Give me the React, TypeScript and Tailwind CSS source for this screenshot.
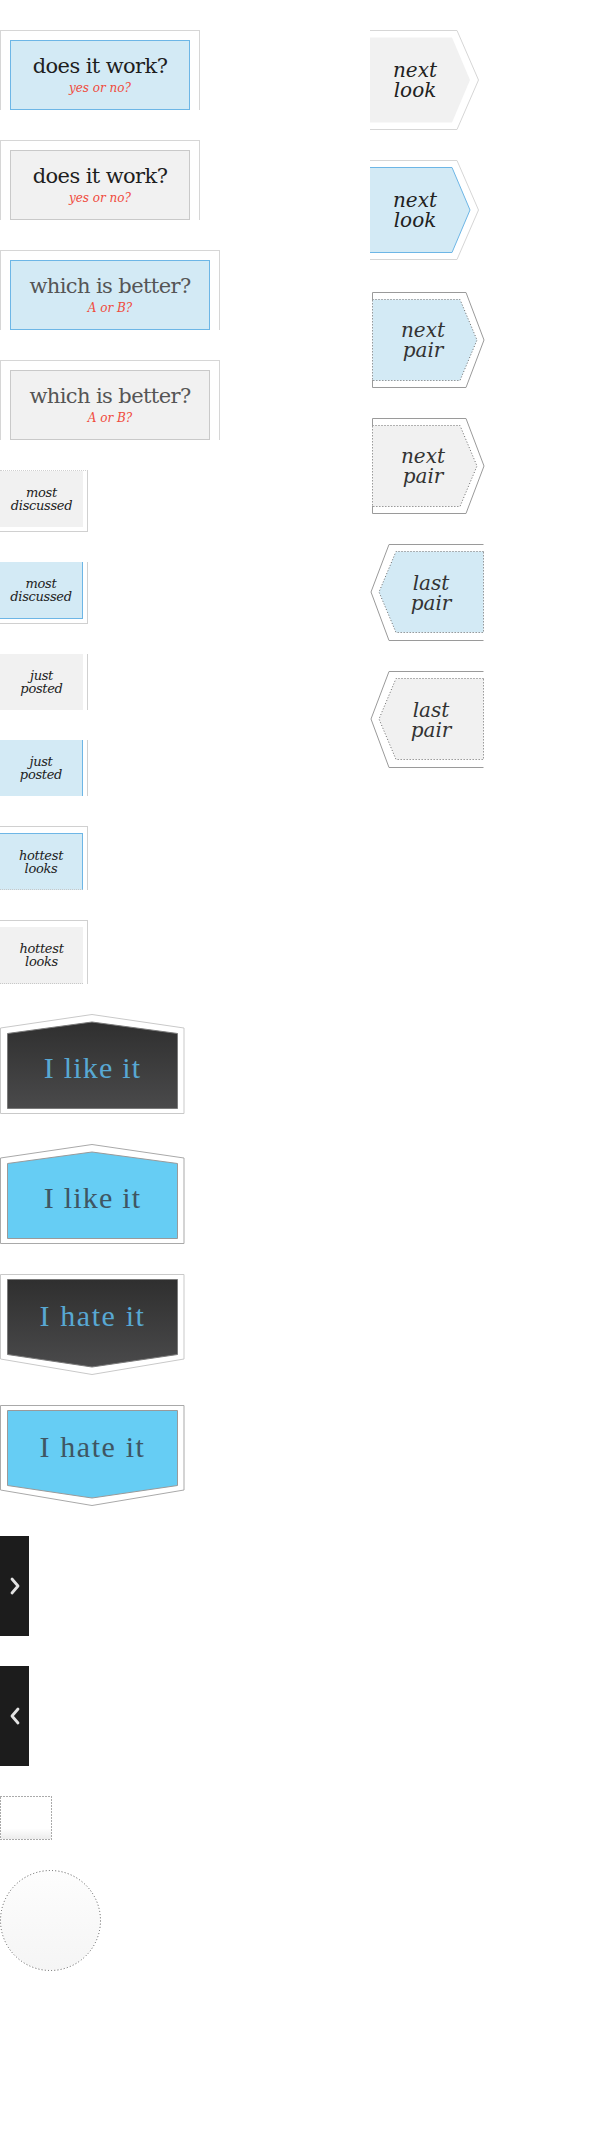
import React from "react";

const slab = "font-['DejaVu_Serif',serif]";
const thin = "font-['Liberation_Serif',serif]";

const BLUE_FILL = "#d3eaf5";
const BLUE_LINE = "#6db6e6";
const GRAY_FILL = "#f1f1f1";

const QuestionBox = ({ title, sub, blue, wide, dim }: any) => (
  <div
    className={`${wide ? "w-[220px]" : "w-[200px]"} h-[80px] border border-b-0 border-[#d6d6d6] pt-[9px] px-[9px]`}
  >
    <div
      className={`h-[70px] border flex flex-col items-center pt-[13px] ${
        blue ? "border-[#6db6e6] bg-[#d3eaf5]" : "border-[#c9c9c9] bg-[#f1f1f1]"
      }`}
    >
      <span
        className={`${slab} text-[21px] leading-[24px] tracking-[-0.6px] ${dim ? "text-[#555555]" : "text-[#1e1e1e]"}`}
      >
        {title}
      </span>
      <span className={`${slab} italic text-[12px] leading-[16px] mt-[2px] text-[#f04a3c]`}>{sub}</span>
    </div>
  </div>
);

const Label = ({ lines }: any) => (
  <div className={`h-full flex flex-col items-center justify-center ${slab} italic text-[13px] leading-[13px] text-[#222] tracking-[-0.3px]`}>
    {lines.map((l: string) => (
      <span key={l}>{l}</span>
    ))}
  </div>
);

const MostDiscussed = ({ blue }: any) =>
  blue ? (
    <div className="w-[88px] h-[62px] border-r border-b border-[#d0d0d0] pr-[4px] pb-[4px]">
      <div className="h-full bg-[#d3eaf5] border-r border-b border-[#6db6e6]">
        <Label lines={["most", "discussed"]} />
      </div>
    </div>
  ) : (
    <div className="w-[88px] h-[62px] border-t border-r border-b border-[#d0d0d0] [border-top-style:dotted] pr-[4px] pb-[4px]">
      <div className="h-full bg-[#f1f1f1]">
        <Label lines={["most", "discussed"]} />
      </div>
    </div>
  );

const JustPosted = ({ blue }: any) => (
  <div className="w-[88px] h-[56px] border-r border-[#d0d0d0] pr-[4px]">
    <div className={`h-full ${blue ? "bg-[#d3eaf5] border-r border-[#6db6e6]" : "bg-[#f1f1f1]"}`}>
      <Label lines={["just", "posted"]} />
    </div>
  </div>
);

const HottestLooks = ({ blue }: any) => (
  <div className="w-[88px] h-[64px] border-t border-r border-[#d0d0d0] pt-[6px] pr-[4px]">
    <div
      className={`h-full border-b border-b-[#c8c8c8] [border-bottom-style:dotted] ${
        blue ? "bg-[#d3eaf5] border-t border-r border-t-[#6db6e6] border-r-[#6db6e6]" : "bg-[#f1f1f1]"
      }`}
    >
      <Label lines={["hottest", "looks"]} />
    </div>
  </div>
);

const ArrowText = ({ top, bottom, className }: any) => (
  <div
    className={`absolute inset-0 flex flex-col items-center justify-center ${slab} italic text-[20px] leading-[20px] text-[#222] ${className}`}
  >
    <span>{top}</span>
    <span>{bottom}</span>
  </div>
);

const NextLook = ({ blue }: any) => (
  <div className="relative w-[112px] h-[100px]">
    <svg width="112" height="100" className="absolute inset-0">
      <polygon points="0,0.5 87,0.5 108.5,50 87,99.5 0,99.5" fill="#ffffff" />
      <polyline points="0,0.5 87,0.5 108.5,50 87,99.5 0,99.5" fill="none" stroke="#d6d6d6" />
      <polygon points="0,7.5 82,7.5 100,50 82,92.5 0,92.5" fill={blue ? BLUE_FILL : GRAY_FILL} />
      {blue && <polyline points="0,7.5 82,7.5 100,50 82,92.5 0,92.5" fill="none" stroke={BLUE_LINE} />}
    </svg>
    <ArrowText top="next" bottom="look" className="pr-[22px]" />
  </div>
);

const NextPair = ({ blue }: any) => (
  <div className="relative w-[116px] h-[96px]">
    <svg width="116" height="96" className="absolute inset-0">
      <polygon points="2.5,7.5 90,7.5 107,48 90,88.5 2.5,88.5" fill={blue ? BLUE_FILL : GRAY_FILL} />
      <polygon
        points="2.5,7.5 90,7.5 107,48 90,88.5 2.5,88.5"
        fill="none"
        stroke="#6a6a6a"
        strokeDasharray="1 2"
      />
      <polyline points="2.5,8 2.5,0.5 96,0.5 114,48 96,95.5 2.5,95.5 2.5,88" fill="none" stroke="#9a9a9a" />
    </svg>
    <ArrowText top="next" bottom="pair" className="pr-[10px] text-[#333]" />
  </div>
);

const LastPair = ({ blue }: any) => (
  <div className="relative w-[116px] h-[97px]">
    <svg width="116" height="97" className="absolute inset-0">
      <polygon points="113.5,7.5 26,7.5 9,48 26,88.5 113.5,88.5" fill={blue ? BLUE_FILL : GRAY_FILL} />
      <polygon
        points="113.5,7.5 26,7.5 9,48 26,88.5 113.5,88.5"
        fill="none"
        stroke="#6a6a6a"
        strokeDasharray="1 2"
      />
      <polyline points="19,0.5 113.5,0.5" fill="none" stroke="#9a9a9a" />
      <polyline points="19,0.5 1,48 19,96.5 113.5,96.5" fill="none" stroke="#9a9a9a" />
    </svg>
    <ArrowText top="last" bottom="pair" className="pl-[6px] text-[#333]" />
  </div>
);

const LikeIt = ({ blue }: any) => (
  <div className="relative w-[185px] h-[100px]">
    <svg width="185" height="100" className="absolute inset-0">
      <defs>
        <linearGradient id="likeDark" x1="0" y1="0" x2="0" y2="1">
          <stop offset="0" stopColor="#2f2f2f" />
          <stop offset="1" stopColor="#4a4a4b" />
        </linearGradient>
      </defs>
      <polygon
        points="0.5,14 92,0.5 184,14 184,99.5 0.5,99.5"
        fill="#ffffff"
        stroke={blue ? "#a9a9a9" : "#c9c9c9"}
      />
      <polygon
        points="7.5,19.5 92,8 177.5,19.5 177.5,94.5 7.5,94.5"
        fill={blue ? "#66cdf4" : "url(#likeDark)"}
        stroke={blue ? "#9a9a9a" : "#7a7a7a"}
      />
    </svg>
    <div
      className={`absolute inset-0 flex items-start justify-center pt-[37px] ${thin} text-[30px] leading-[34px] tracking-[1.2px] ${
        blue ? "text-[#3f5663]" : "text-[#58a8d3]"
      }`}
    >
      I like it
    </div>
  </div>
);

const HateIt = ({ blue }: any) => (
  <div className="relative w-[185px] h-[101px]">
    <svg width="185" height="101" className="absolute inset-0">
      <defs>
        <linearGradient id="hateDark" x1="0" y1="0" x2="0" y2="1">
          <stop offset="0" stopColor="#2f2f2f" />
          <stop offset="1" stopColor="#4a4a4b" />
        </linearGradient>
      </defs>
      <polygon
        points="0.5,0.5 184,0.5 184,85 92,100.5 0.5,85"
        fill="#ffffff"
        stroke={blue ? "#a9a9a9" : "#c9c9c9"}
      />
      <polygon
        points="7.5,5.5 177.5,5.5 177.5,80.5 92,93 7.5,80.5"
        fill={blue ? "#66cdf4" : "url(#hateDark)"}
        stroke={blue ? "#9a9a9a" : "#7a7a7a"}
      />
    </svg>
    <div
      className={`absolute inset-0 flex items-start justify-center pt-[25px] ${thin} text-[30px] leading-[34px] tracking-[1.6px] ${
        blue ? "text-[#3f5663]" : "text-[#58a8d3]"
      }`}
    >
      I hate it
    </div>
  </div>
);

const Tab = ({ left }: any) => (
  <div className="w-[29px] h-[100px] bg-[#1c1c1c] flex items-center justify-center">
    <svg width="10" height="18" viewBox="0 0 10 18">
      <polyline
        points={left ? "8,2 2,9 8,16" : "2,2 8,9 2,16"}
        fill="none"
        stroke="#e2e2e2"
        strokeWidth="2.8"
        strokeLinecap="round"
        strokeLinejoin="round"
      />
    </svg>
  </div>
);

const DottedSquare = () => (
  <div className="relative w-[52px] h-[44px]">
    <div className="absolute left-[1px] top-[1px] w-[50px] h-[42px] bg-gradient-to-b from-white from-[75%] to-[#ececec]" />
    <svg width="52" height="44" className="absolute inset-0">
      <rect x="0.5" y="0.5" width="51" height="43" fill="none" stroke="#555" strokeDasharray="1 2" />
    </svg>
  </div>
);

const DottedCircle = () => (
  <div className="relative w-[101px] h-[101px]">
    <div className="absolute inset-[1px] rounded-full bg-gradient-to-b from-[#fdfdfd] to-[#f5f5f5]" />
    <svg width="101" height="101" className="absolute inset-0">
      <circle cx="50.5" cy="50.5" r="50" fill="none" stroke="#555" strokeDasharray="1 2.2" />
    </svg>
  </div>
);

export default function App() {
  return (
    <div className="w-[590px] h-[2131px] bg-white flex">
      <div className="w-[370px] flex flex-col items-start gap-[30px] pt-[30px]">
        <QuestionBox title="does it work?" sub="yes or no?" blue />
        <QuestionBox title="does it work?" sub="yes or no?" />
        <QuestionBox title="which is better?" sub="A or B?" blue wide dim />
        <QuestionBox title="which is better?" sub="A or B?" wide dim />
        <MostDiscussed />
        <MostDiscussed blue />
        <JustPosted />
        <JustPosted blue />
        <HottestLooks blue />
        <HottestLooks />
        <LikeIt />
        <LikeIt blue />
        <HateIt />
        <HateIt blue />
        <Tab />
        <Tab left />
        <DottedSquare />
        <DottedCircle />
      </div>
      <div className="flex flex-col items-start gap-[30px] pt-[30px]">
        <NextLook />
        <NextLook blue />
        <div className="mt-[2px]">
          <NextPair blue />
        </div>
        <NextPair />
        <LastPair blue />
        <LastPair />
      </div>
    </div>
  );
}
